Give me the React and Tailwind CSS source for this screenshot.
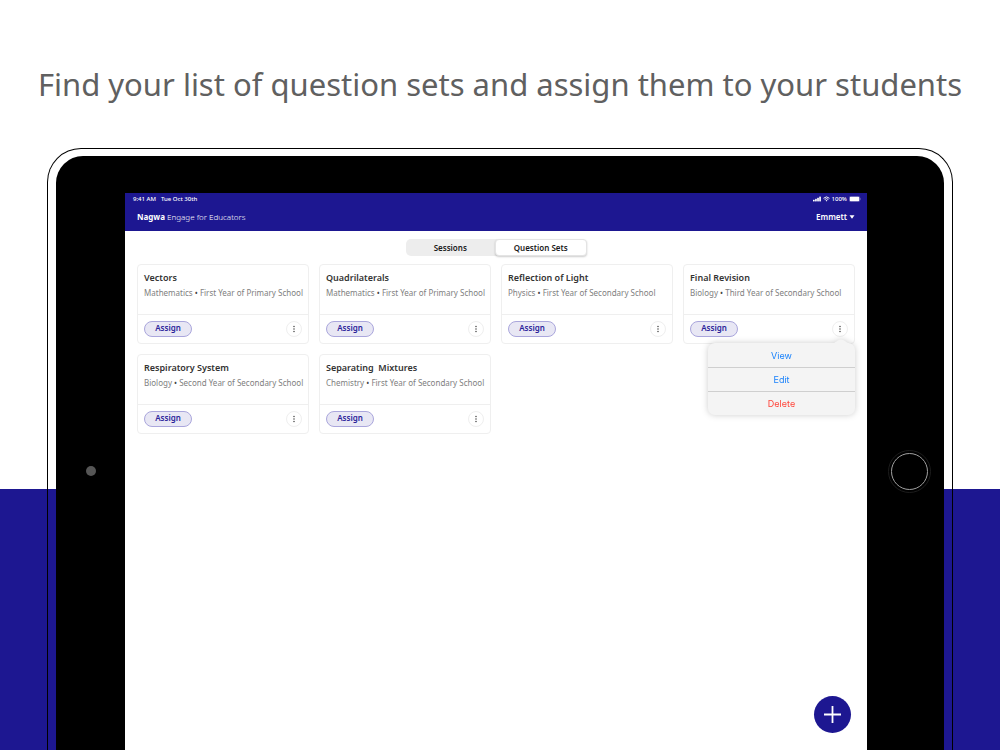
import React, { useState } from 'react';

const questionSets = [
  { title: 'Vectors', subject: 'Mathematics', year: 'First Year of Primary School' },
  { title: 'Quadrilaterals', subject: 'Mathematics', year: 'First Year of Primary School' },
  { title: 'Reflection of Light', subject: 'Physics', year: 'First Year of Secondary School' },
  { title: 'Final Revision', subject: 'Biology', year: 'Third Year of Secondary School' },
  { title: 'Respiratory System', subject: 'Biology', year: 'Second Year of Secondary School' },
  { title: 'Separating  Mixtures', subject: 'Chemistry', year: 'First Year of Secondary School' },
];

const StatusBar = () => (
  <div className="flex items-center justify-between pl-[8px] pr-[6px] text-[6px] leading-[12px] font-medium">
    <div className="flex gap-[5px]">
      <span>9:41 AM</span>
      <span>Tue Oct 30th</span>
    </div>
    <div className="flex items-center gap-[2px]">
      <svg className="w-[8px] h-[6px]" viewBox="0 0 18 12" fill="currentColor">
        <rect x="0" y="7.5" width="3.8" height="4" rx="1" />
        <rect x="4.7" y="5.5" width="3.8" height="6" rx="1" />
        <rect x="9.4" y="3" width="3.8" height="8.5" rx="1" />
        <rect x="14" y="0.5" width="3.8" height="11" rx="1" />
      </svg>
      <svg className="w-[7px] h-[6px]" viewBox="0 0 16 12" fill="none" stroke="currentColor" strokeWidth="2.2">
        <path d="M1.2 4.4a9.8 9.8 0 0 1 13.6 0" />
        <path d="M3.8 7.2a6 6 0 0 1 8.4 0" />
        <path d="M8 11.6 5.8 9.3a3.2 3.2 0 0 1 4.4 0z" fill="currentColor" stroke="none" />
      </svg>
      <span>100%</span>
      <svg className="w-[12px] h-[6px]" viewBox="0 0 24 12">
        <rect x="0.5" y="0.5" width="21" height="11" rx="3" fill="none" stroke="#ffffff" strokeOpacity="0.4" />
        <rect x="1.5" y="1.5" width="19" height="9" rx="2" fill="#ffffff" />
        <path d="M22.6 4v4c.8-.4 1.2-1.1 1.2-2s-.4-1.6-1.2-2z" fill="#ffffff" fillOpacity="0.5" />
      </svg>
    </div>
  </div>
);

const CardMenu = () => (
  <div className="absolute top-full right-[-1px] z-10 w-[147px] drop-shadow-[0_0_3px_rgba(0,0,0,0.2)]">
    <svg className="absolute -top-[4px] right-[4px] w-[20px] h-[5px]" viewBox="0 0 20 5" fill="#f4f4f4">
      <path d="M0 5c4 0 6-4.5 10-4.5S16 5 20 5z" />
    </svg>
    <div className="flex flex-col rounded-[7px] bg-[#f4f4f4] text-[9px] leading-[23px] font-[Inter,sans-serif] text-[#1a82fb]">
      <button type="button" className="pt-[1px]">View</button>
      <button type="button" className="border-t border-[#cfcfcf]">Edit</button>
      <button type="button" className="border-t border-[#cfcfcf] text-[#ff453a]">Delete</button>
    </div>
  </div>
);

const Card = ({ set, open, onToggle }) => (
  <article className="relative h-[80px] flex flex-col rounded-[4px] border border-[#efefef] bg-white">
    <div className="flex-1 px-[6px] pt-[6px]">
      <h2 className="text-[9px] leading-[14px] font-semibold text-[#333333] whitespace-pre">{set.title}</h2>
      <p className="mt-[2px] text-[8px] leading-[12px] text-[#808080] whitespace-nowrap">
        {set.subject} <span className="text-[#444444]">•</span> {set.year}
      </p>
    </div>
    <div className="h-[29px] px-[6px] flex items-center justify-between border-t border-[#efefef]">
      <button
        type="button"
        className="w-[48px] h-[16px] flex justify-center rounded-full border border-[#aaa6dc] bg-[#e8e7f4] text-[8px] leading-[12px] font-semibold text-[#2a2299]"
      >
        Assign
      </button>
      <button
        type="button"
        aria-label="More options"
        onClick={onToggle}
        className="size-[16px] flex items-center justify-center rounded-full border border-[#efefef] bg-white"
      >
        <svg className="w-[2px] h-[8px]" viewBox="0 0 2 8" fill="#555555">
          <circle cx="1" cy="1.5" r="0.8" />
          <circle cx="1" cy="4" r="0.8" />
          <circle cx="1" cy="6.5" r="0.8" />
        </svg>
      </button>
    </div>
    {open && <CardMenu />}
  </article>
);

const App = () => {
  const [tab, setTab] = useState('sets');
  const [openMenu, setOpenMenu] = useState('Final Revision');

  const tabClass = (name) =>
    name === tab
      ? 'flex-1 rounded-[4px] border border-[#e4e4e4] bg-white shadow-[0_1px_2px_rgba(0,0,0,0.2)]'
      : 'flex-1';

  return (
    <main className="h-screen flex flex-col overflow-hidden bg-[linear-gradient(to_bottom,#ffffff_489px,#1d1791_489px)] font-['Noto_Sans',sans-serif]">
      <h1 className="pt-[60px] pb-[40px] text-center text-[31px] leading-[48px] text-[#606060] whitespace-nowrap">
        Find your list of question sets and assign them to your students
      </h1>

      {/* Tablet frame */}
      <div className="flex-1 flex mx-[47px] pt-[7px] px-[8px] rounded-t-[34px] border border-b-0 border-black">
        <div className="flex-1 flex rounded-t-[27px] bg-black">
          <div className="w-[69px] flex justify-center">
            <span className="mt-[310px] size-[10px] rounded-full bg-[#565656]" />
          </div>

          <section className="relative flex-1 min-w-0 mt-[37px] bg-white">
            <header className="h-[38px] bg-[#1d1791] text-white">
              <StatusBar />
              <div className="flex items-center justify-between px-[12px] pt-[5px] text-[8px] leading-[14px]">
                <p className="font-light">
                  <b className="font-bold">Nagwa</b> Engage for Educators
                </p>
                <button type="button" className="flex items-center gap-[2px] font-semibold">
                  Emmett
                  <svg className="w-[6px] h-[4px]" viewBox="0 0 6 4" fill="currentColor">
                    <path d="M0.5 0.3h5L3 3.7z" />
                  </svg>
                </button>
              </div>
            </header>

            <div className="px-[12px] pt-[8px]">
              <nav className="mx-auto mb-[8px] w-[181px] h-[17px] flex rounded-[5px] bg-[#ededed] text-[8px] leading-[14px] font-semibold text-[#1a1a1a]">
                <button type="button" className={tabClass('sessions')} onClick={() => setTab('sessions')}>
                  Sessions
                </button>
                <button type="button" className={tabClass('sets')} onClick={() => setTab('sets')}>
                  Question Sets
                </button>
              </nav>

              <div className="grid grid-cols-4 gap-[10px]">
                {questionSets.map((set) => (
                  <Card
                    key={set.title}
                    set={set}
                    open={openMenu === set.title}
                    onToggle={() => setOpenMenu(openMenu === set.title ? null : set.title)}
                  />
                ))}
              </div>
            </div>

            <button
              type="button"
              aria-label="Add question set"
              className="absolute right-[16px] bottom-[17px] size-[37px] flex items-center justify-center rounded-full bg-[#1d1791]"
            >
              <svg className="size-[17px]" viewBox="0 0 17 17" stroke="#ffffff" strokeWidth="1.8">
                <path d="M8.5 0v17M0 8.5h17" />
              </svg>
            </button>
          </section>

          <div className="w-[77px] pl-[7px] flex justify-center">
            <span className="mt-[294px] size-[43px] p-[2px] rounded-full border border-[#1c1c1c]">
              <span className="block size-full rounded-full border border-[#a0a0a0]" />
            </span>
          </div>
        </div>
      </div>
    </main>
  );
};

export default App;
